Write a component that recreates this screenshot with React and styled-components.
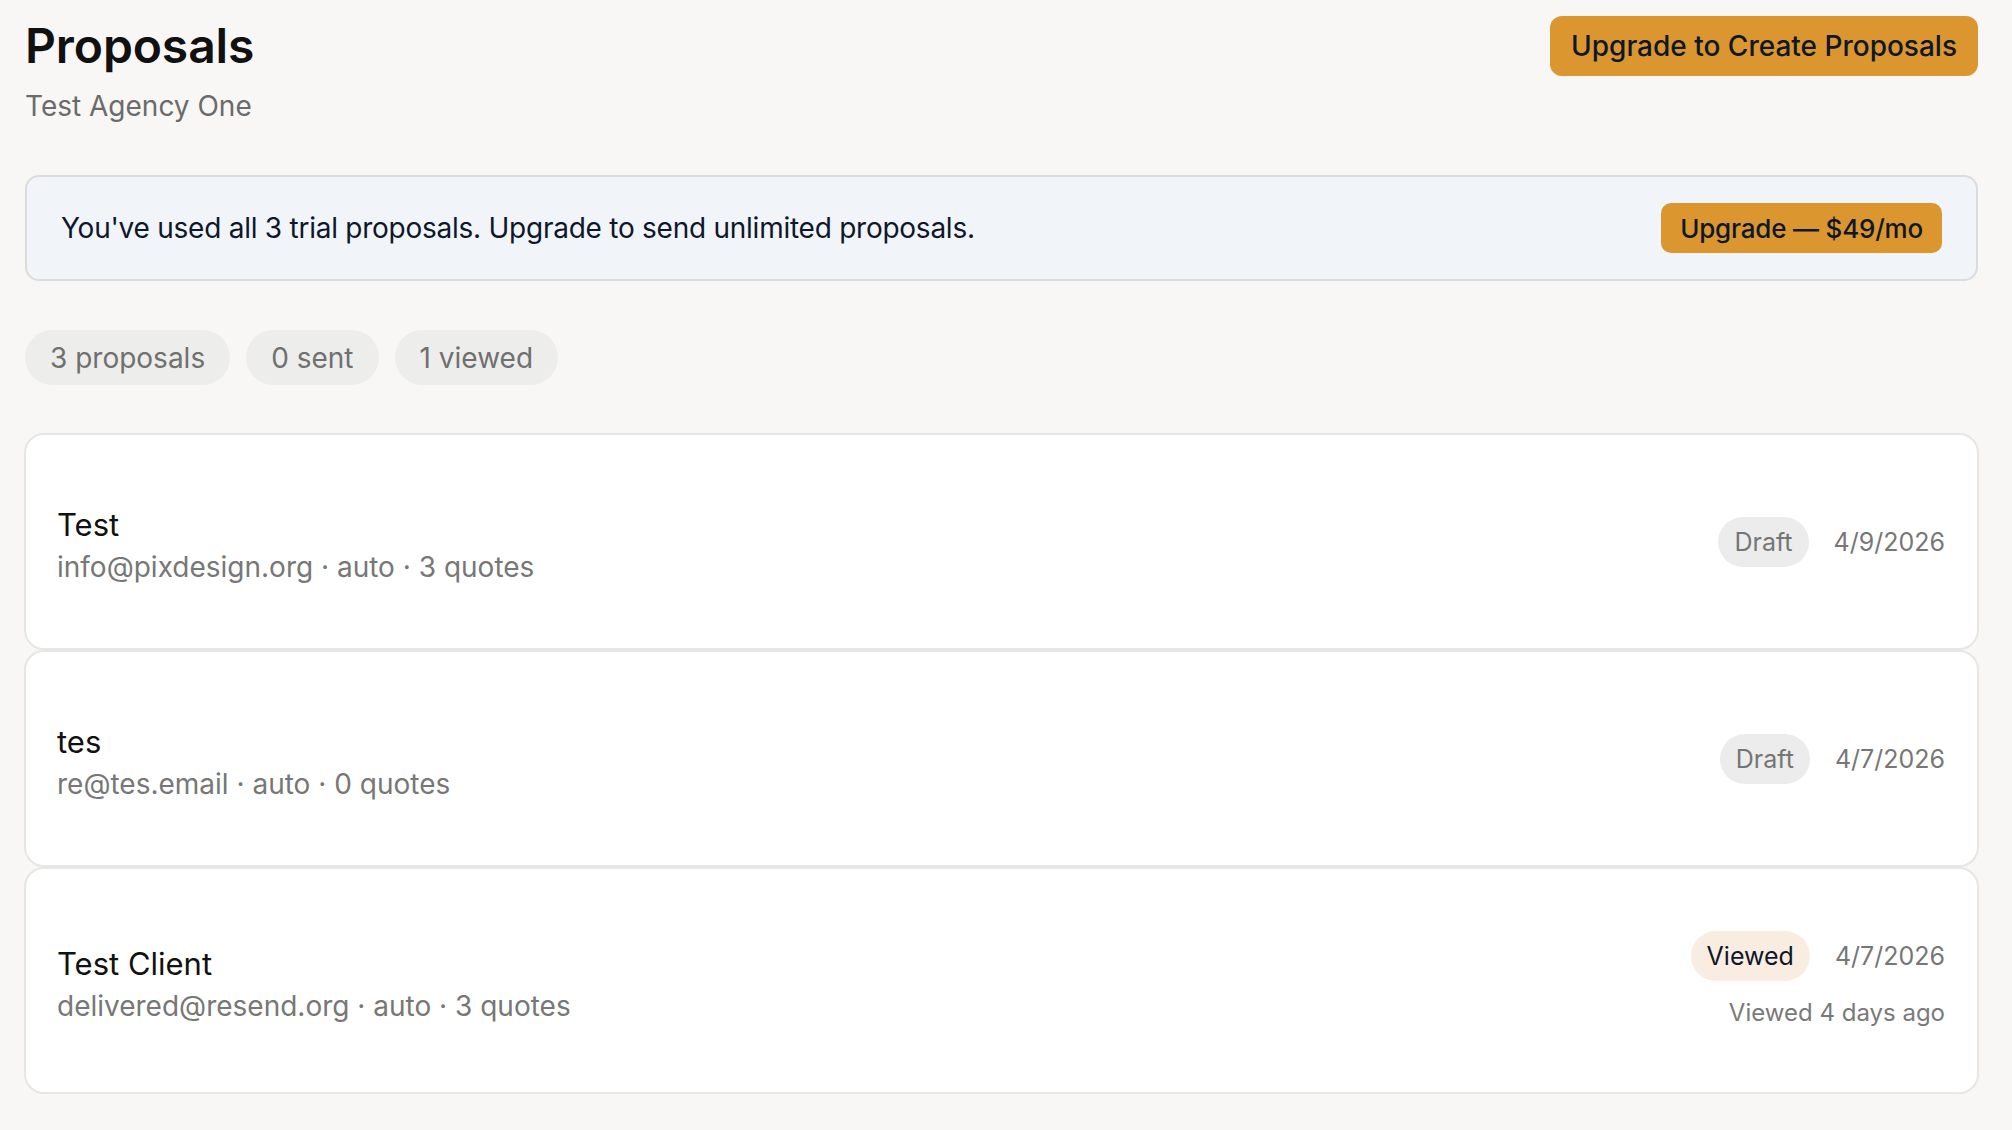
import React from "react";
import styled, { createGlobalStyle } from "styled-components";

const GlobalStyle = createGlobalStyle`
  html, body {
    margin: 0;
    padding: 0;
    background: #f8f7f5;
  }
  body {
    font-family: Inter, "Noto Sans", "Liberation Sans", sans-serif;
    color: #111111;
  }
  * { box-sizing: border-box; }
`;

const Page = styled.div`
  padding: 18px 34px 40px 25px;
  min-height: 1130px;
  background: #f8f7f5;
`;

const Header = styled.header`
  display: flex;
  justify-content: space-between;
  align-items: flex-start;
`;

const TitleBlock = styled.div`
  display: flex;
  flex-direction: column;
`;

const Title = styled.h1`
  margin: 0;
  font-size: 48px;
  line-height: 56px;
  font-weight: 600;
  letter-spacing: -0.1px;
  color: #111111;
`;

const Subtitle = styled.div`
  margin-top: 14px;
  font-size: 28px;
  line-height: 36px;
  color: #6b6b6b;
`;

const PrimaryButton = styled.button`
  border: none;
  background: #db962f;
  color: #0f172a;
  font-family: inherit;
  font-weight: 500;
  font-size: ${(p) => p.$size || 28}px;
  height: ${(p) => p.$height || 60}px;
  padding: 0 ${(p) => p.$padX || 20}px;
  border-radius: ${(p) => p.$radius || 12}px;
  margin-top: ${(p) => p.$top || 0}px;
  letter-spacing: ${(p) => p.$tracking || 0}px;
  cursor: pointer;
  white-space: nowrap;
`;

const Banner = styled.div`
  margin-top: 51px;
  display: flex;
  align-items: center;
  justify-content: space-between;
  padding: 26px 34px;
  background: #f1f5f9;
  border: 2px solid #dcdcdc;
  border-radius: 14px;
`;

const BannerText = styled.p`
  margin: 0;
  font-size: 28px;
  line-height: 36px;
  letter-spacing: -0.25px;
  color: #0f172a;
`;

const Stats = styled.div`
  margin-top: 49px;
  display: flex;
  gap: 16px;
`;

const StatPill = styled.span`
  display: inline-flex;
  align-items: center;
  height: 55px;
  padding: 0 25px;
  border-radius: 999px;
  background: #ededeb;
  color: #707070;
  font-size: 28px;
`;

const List = styled.div`
  margin: 48px -1px 0;
  display: flex;
  flex-direction: column;
`;

const Card = styled.div`
  display: flex;
  align-items: center;
  justify-content: space-between;
  padding: 62px 32px 62px 31px;
  background: #ffffff;
  border: 2px solid #e6e6e4;
  border-radius: 20px;
`;

const CardMain = styled.div`
  display: flex;
  flex-direction: column;
  gap: 2px;
  padding-top: 7px;
`;

const CardTitle = styled.div`
  font-size: 31px;
  line-height: 42px;
  color: #111111;
`;

const CardMeta = styled.div`
  font-size: 28px;
  line-height: 38px;
  color: #777777;
`;

const CardSide = styled.div`
  display: flex;
  flex-direction: column;
  align-items: flex-end;
  gap: 14px;
`;

const StatusRow = styled.div`
  display: flex;
  align-items: center;
  gap: 25px;
`;

const StatusBadge = styled.span`
  display: inline-flex;
  align-items: center;
  height: 50px;
  padding: 0 16px;
  border-radius: 999px;
  font-size: 25px;
  background: ${(p) => (p.$viewed ? "#f9ede1" : "#ececec")};
  color: ${(p) => (p.$viewed ? "#0f172a" : "#757575")};
`;

const DateText = styled.span`
  font-size: 25px;
  line-height: 34px;
  color: #777777;
`;

const Note = styled.div`
  font-size: 24px;
  line-height: 35px;
  color: #7a7a7a;
`;

const proposals = [
  { name: "Test", meta: "info@pixdesign.org · auto · 3 quotes", status: "Draft", date: "4/9/2026" },
  { name: "tes", meta: "re@tes.email · auto · 0 quotes", status: "Draft", date: "4/7/2026" },
  {
    name: "Test Client",
    meta: "delivered@resend.org · auto · 3 quotes",
    status: "Viewed",
    date: "4/7/2026",
    note: "Viewed 4 days ago",
  },
];

export default function App() {
  return (
    <>
      <GlobalStyle />
      <Page>
        <Header>
          <TitleBlock>
            <Title>Proposals</Title>
            <Subtitle>Test Agency One</Subtitle>
          </TitleBlock>
          <PrimaryButton $top={-2} $padX={21}>Upgrade to Create Proposals</PrimaryButton>
        </Header>

        <Banner>
          <BannerText>
            You've used all 3 trial proposals. Upgrade to send unlimited proposals.
          </BannerText>
          <PrimaryButton $size={26} $height={50} $padX={19} $radius={10} $tracking={-0.2}>
            Upgrade — $49/mo
          </PrimaryButton>
        </Banner>

        <Stats>
          <StatPill>3 proposals</StatPill>
          <StatPill>0 sent</StatPill>
          <StatPill>1 viewed</StatPill>
        </Stats>

        <List>
          {proposals.map((p) => (
            <Card key={p.name}>
              <CardMain>
                <CardTitle>{p.name}</CardTitle>
                <CardMeta>{p.meta}</CardMeta>
              </CardMain>
              <CardSide>
                <StatusRow>
                  <StatusBadge $viewed={p.status === "Viewed"}>{p.status}</StatusBadge>
                  <DateText>{p.date}</DateText>
                </StatusRow>
                {p.note && <Note>{p.note}</Note>}
              </CardSide>
            </Card>
          ))}
        </List>
      </Page>
    </>
  );
}
